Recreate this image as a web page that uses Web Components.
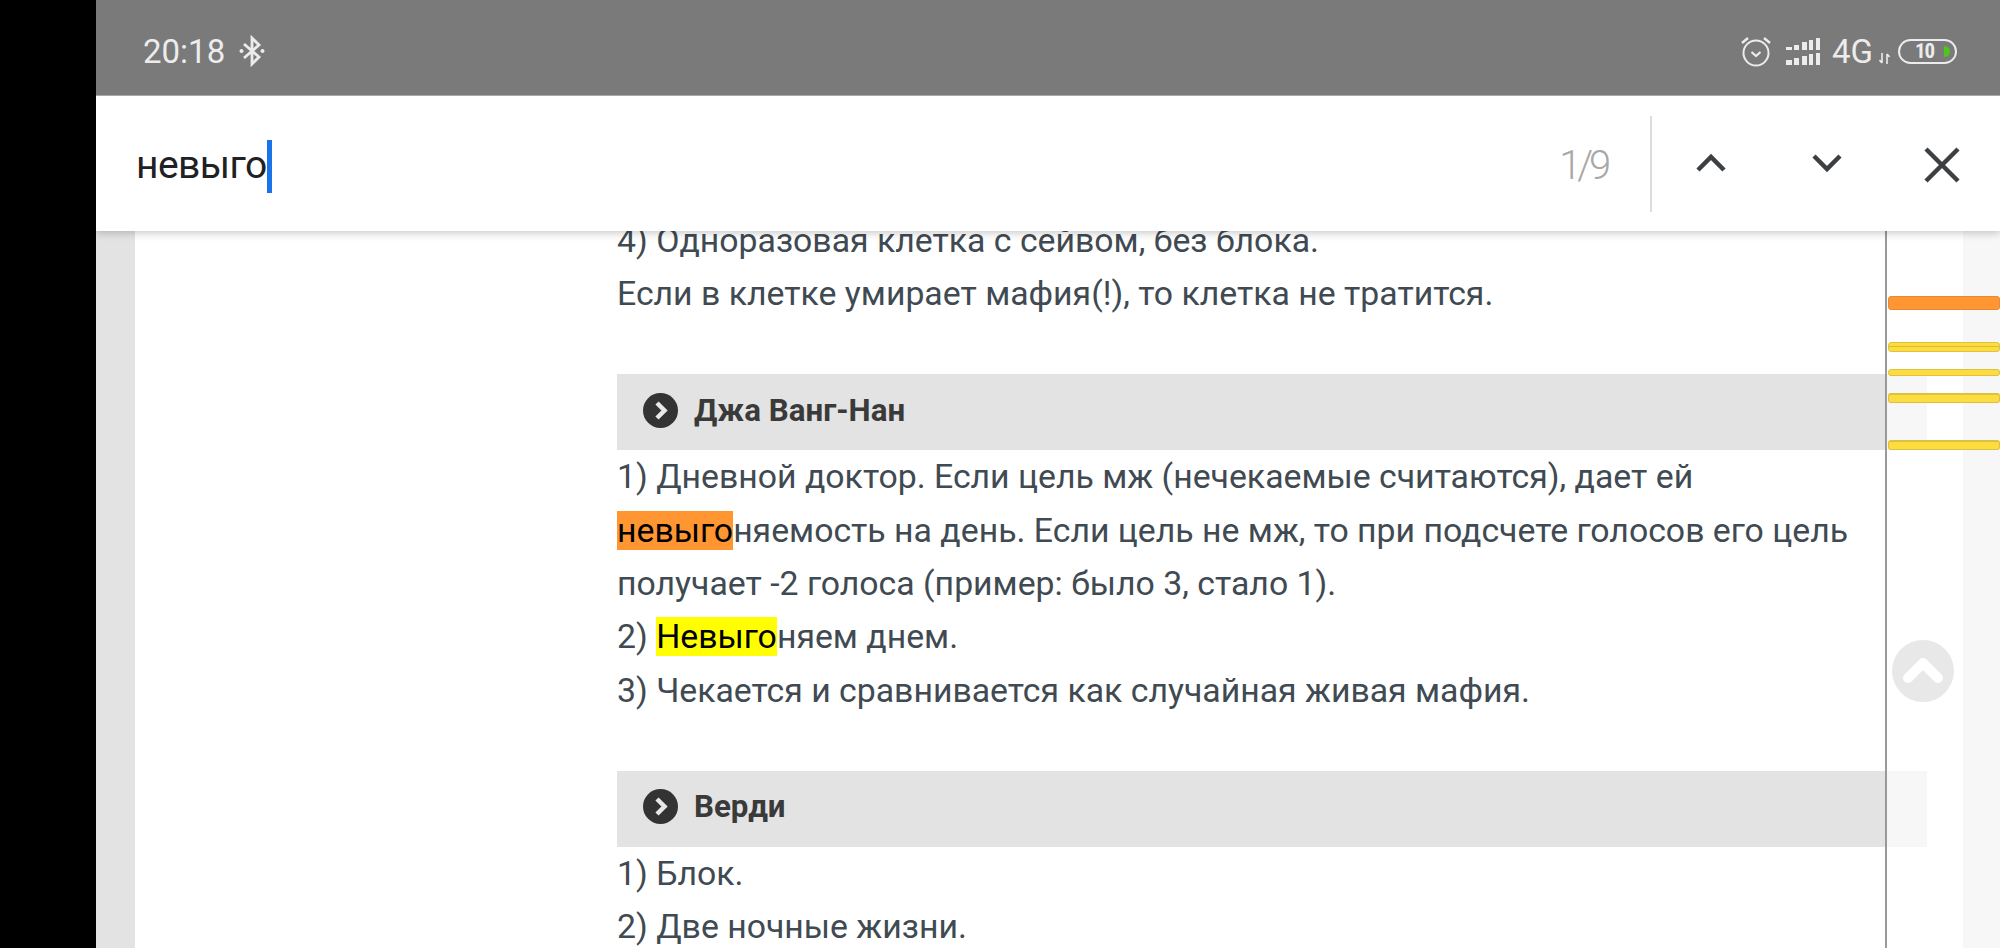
<!DOCTYPE html>
<html><head><meta charset="utf-8"><style>
html,body{margin:0;padding:0;height:100%;overflow:hidden;background:#000}
body{font-family:Roboto,sans-serif}
</style></head><body>
<phone-screen>
<status-bar></status-bar>
<find-bar></find-bar>
<page-view>
<page-text>4) Одноразовая клетка с сейвом, без блока.<br>Если в клетке умирает мафия(!), то клетка не тратится.<br>&nbsp;</page-text>
<spoiler-head>Джа Ванг-Нан</spoiler-head>
<page-text>1) Дневной доктор. Если цель мж (нечекаемые считаются), дает ей<br><find-mark active>невыго</find-mark>няемость на день. Если цель не мж, то при подсчете голосов его цель<br>получает -2 голоса (пример: было 3, стало 1).<br>2) <find-mark>Невыго</find-mark>няем днем.<br>3) Чекается и сравнивается как случайная живая мафия.<br>&nbsp;</page-text>
<spoiler-head>Верди</spoiler-head>
<page-text>1) Блок.<br>2) Две ночные жизни.</page-text>
</page-view>
</phone-screen>
<script>
function def(name,html,init){customElements.define(name,class extends HTMLElement{constructor(){super();this.attachShadow({mode:'open'}).innerHTML=html;}});}
def('phone-screen',`<style>:host{display:flex;flex-direction:column;margin-left:96px;width:1904px;height:948px;overflow:hidden;position:relative;background:#fff}</style><slot></slot>`);
def('status-bar',`<style>
:host{display:flex;align-items:center;height:96px;flex:none;background:#7a7a7a;color:#ececec;padding:7px 43px 0 47px;box-sizing:border-box;position:relative;z-index:3;border-bottom:1px solid #aaa}
.t{font:400 33px/1 Roboto,sans-serif;margin-right:14px;position:relative;top:0}
.sp{flex:1}
svg{display:block}
.g{font:400 33px/1 Roboto,sans-serif;margin-left:11px}
.arr{margin-left:6px;margin-top:14px}
.bat{margin-left:8px;width:59px;height:25px;box-sizing:border-box;border:2px solid #ececec;border-radius:13px;display:flex;align-items:center;justify-content:center;position:relative;font:700 21px/1 "Roboto Condensed",Roboto,sans-serif;padding-right:6px;letter-spacing:-1px}
.bat i{position:absolute;right:5px;top:5px;width:6px;height:11px;background:#4fc41c;border-radius:0 6px 6px 0}
</style>
<span class="t">20:18</span>
<svg width="26" height="32" viewBox="0 0 26 32" fill="none" stroke="#ececec" stroke-width="2.8"><path d="M5 9 L20 22 L13 29 V3 L20 10 L5 23"/><circle cx="2.500" cy="16" r="2" fill="#ececec" stroke="none"/><circle cx="23.5" cy="16" r="2" fill="#ececec" stroke="none"/></svg>
<span class="sp"></span>
<svg width="32" height="32" viewBox="0 0 32 32" fill="none" stroke="#ececec" stroke-width="2" style="margin-right:14px"><circle cx="16" cy="18" r="12.5"/><path d="M11.5 17 L16 21 L20.500 17" stroke-width="2.2"/><path d="M2 8 L8 3 M24 3 L30 8" stroke-width="2.4"/></svg>
<svg width="35" height="27" viewBox="0 0 35 27" fill="#ececec"><rect x="0" y="9" width="6" height="3"/><rect x="0" y="22" width="6" height="5"/><rect x="8" y="7" width="5" height="5"/><rect x="8" y="20" width="5" height="7"/><rect x="16" y="4" width="5" height="8"/><rect x="16" y="18" width="5" height="9"/><rect x="23" y="2" width="4" height="10"/><rect x="23" y="16" width="4" height="11"/><rect x="30" y="0" width="4" height="12"/><rect x="30" y="15" width="4" height="12"/></svg>
<span class="g">4G</span>
<svg class="arr" width="11" height="11" viewBox="0 0 11 11" fill="none" stroke="#ececec" stroke-width="1.6"><path d="M3 0 V10 M0.500 7 L3 10 M8 11 V1 M8 1 L10.500 4"/></svg>
<div class="bat">10<i></i></div>`);
def('find-bar',`<style>
:host{display:flex;align-items:center;flex:none;height:135px;background:#fff;position:relative;z-index:2;box-shadow:0 2px 8px rgba(0,0,0,.22);box-sizing:border-box;padding-left:40px;color:#202124}
.q{font:400 39px/1 Roboto,sans-serif;letter-spacing:-.55px;position:relative;top:2px}
.c{width:5px;height:53px;background:#1a73e8;flex:none;position:relative;top:3px}
.sp{flex:1}
.n{font:300 40px/1 Roboto,sans-serif;letter-spacing:-4.2px;color:#a8a8a8;margin-right:43px;position:relative;top:2px}
.d{width:2px;height:96px;background:#dadce0;margin-right:44px}
svg{display:block}
</style>
<span class="q">невыго</span><span class="c"></span><span class="sp"></span><span class="n">1/9</span><span class="d"></span>
<svg width="30" height="20" viewBox="0 0 30 20" fill="none" stroke="#3c4043" stroke-width="4.5" style="margin-right:86px;margin-top:-1px"><path d="M2 17 L15 4 L28 17"/></svg>
<svg width="30" height="20" viewBox="0 0 30 20" fill="none" stroke="#3c4043" stroke-width="4.5" style="margin-right:82px;margin-top:-1px"><path d="M2 3 L15 16 L28 3"/></svg>
<svg width="36" height="36" viewBox="0 0 36 36" fill="none" stroke="#3c4043" stroke-width="4.5" style="margin-right:40px;margin-top:2px"><path d="M2 2 L34 34 M34 2 L2 34"/></svg>`);
def('page-view',`<style>
:host{display:block;flex:1;min-height:0;margin-top:-17px;position:relative;background:#e3e3e3;padding:0 37px 0 39px}
.w{background:#fff;height:100%;padding:0 0 0 482px}
.w>div{width:1310px}
.ov{position:absolute;top:0;bottom:0;left:1789px;right:0;background:rgba(255,255,255,.7);border-left:2px solid #999}
.mk{position:absolute;left:1px;right:0;box-sizing:border-box;border-radius:3px}
.o{background:#ff9632;border:1px solid #e58a35}
.y{background:#fddc40;border:1px solid #dcc23e}
.y2{background:linear-gradient(#fddc40 0 3px,#d9bd30 3px 4px,#fddc40 4px)}
.up{position:absolute;left:1796px;top:426px;width:62px;height:62px;display:block}
</style><div class="w"><div><slot></slot></div></div>
<div class="ov">
<div class="mk o" style="top:82px;height:14px"></div>
<div class="mk y y2" style="top:128px;height:10px"></div>
<div class="mk y" style="top:155px;height:7px"></div>
<div class="mk y y2" style="top:179px;height:10px;background:#fddc40;border-top-width:2px"></div>
<div class="mk y" style="top:226px;height:10px;border-top-width:2px"></div>
</div>
<svg class="up" viewBox="0 0 62 62"><circle cx="31" cy="31" r="31" fill="#e8e8e8"/><path d="M16 38 L31 23 L46 38" fill="none" stroke="#fff" stroke-width="10" stroke-linecap="round" stroke-linejoin="round"/></svg>`);
def('page-text',`<style>:host{display:block;font:400 33.8px/53.4px Roboto,sans-serif;color:#3f4a52;white-space:nowrap}</style><slot></slot>`);
def('spoiler-head',`<style>
:host{display:flex;align-items:center;height:76px;box-sizing:border-box;padding:0 0 4px 26px;background:#e3e3e3;font:700 31.3px/1 Roboto,sans-serif;color:#3a3a3a;gap:16px}
svg{display:block;flex:none}
</style><svg width="35" height="35" viewBox="0 0 35 35"><circle cx="17.500" cy="17.500" r="17.500" fill="#333"/><path d="M14 10 L21.500 17.500 L14 25" fill="none" stroke="#e8e8e8" stroke-width="4.500"/></svg><span><slot></slot></span>`);
def('find-mark',`<style>:host{display:inline-block;line-height:39px;height:39px;background:#ff0;color:#000}:host([active]){background:#ff9632}</style><slot></slot>`);
</script>
</body></html>
